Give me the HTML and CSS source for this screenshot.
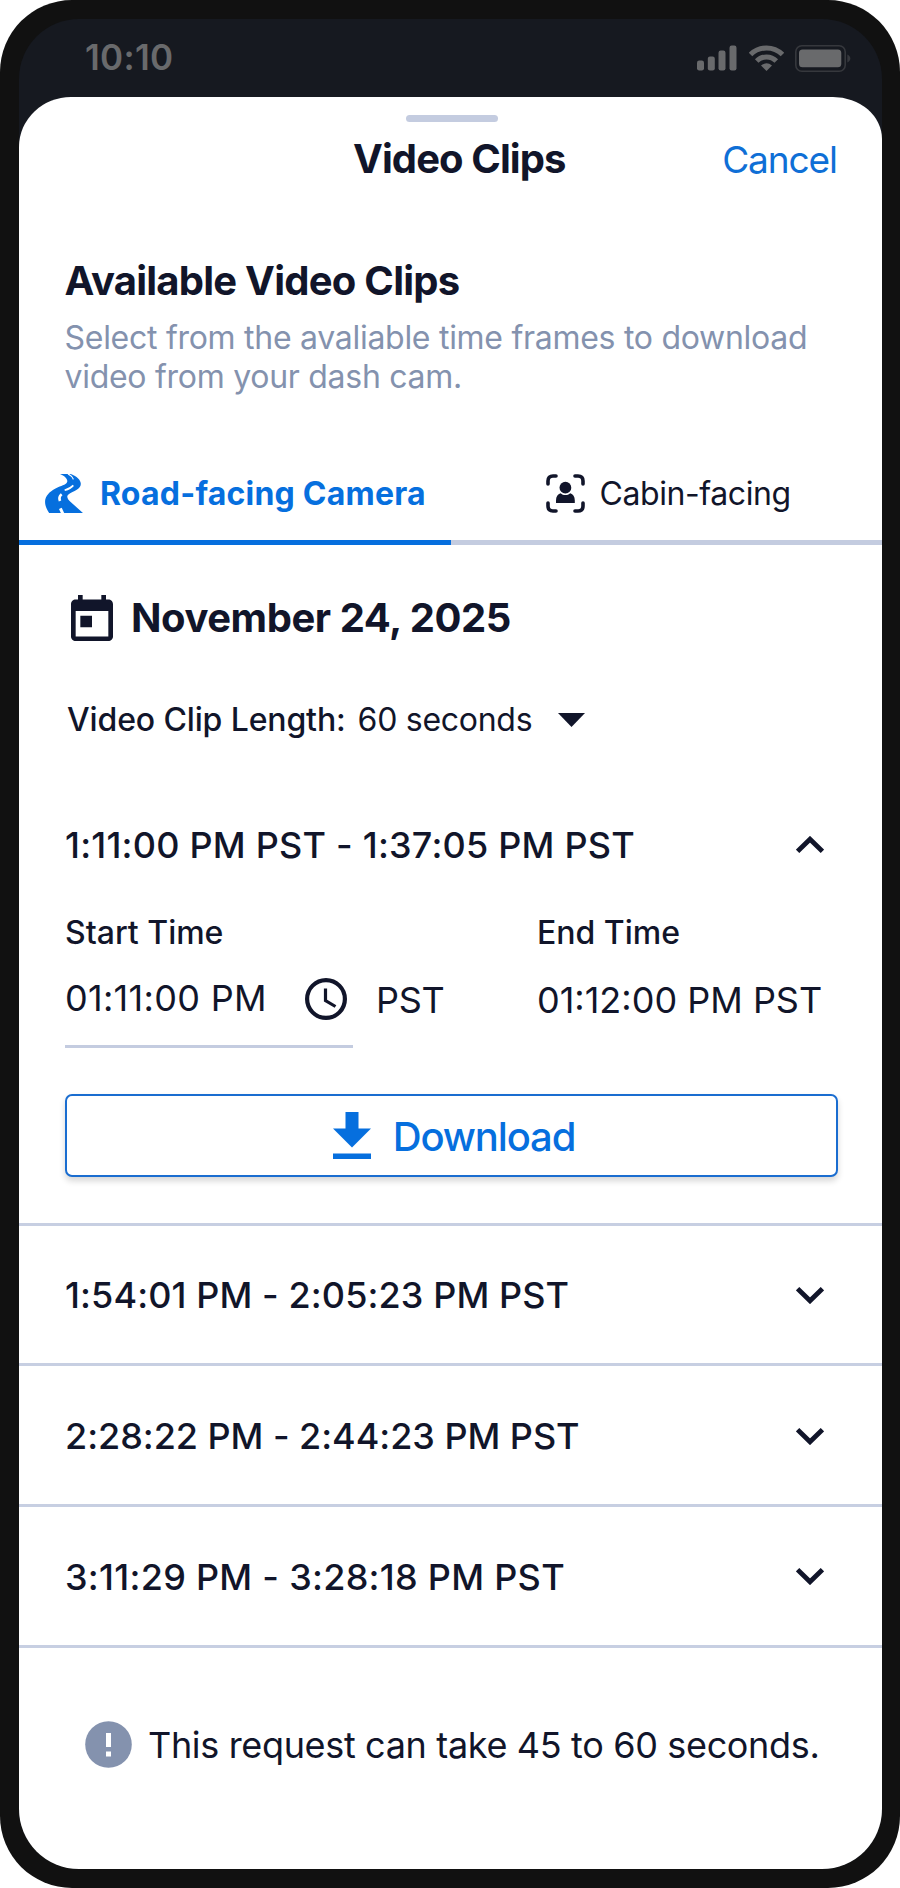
FILE: index.html
```
<!DOCTYPE html>
<html lang="en">
<head>
    <meta charset="UTF-8">
    <meta name="viewport" content="width=device-width, initial-scale=1.0">
    <title>Video Clips</title>
    <link rel="stylesheet" href="styles.css">
</head>
<body>

    <div class="phone">
        <div class="screen">

            <!-- Status bar -->
            <div class="status-bar">
                <span class="status-time">10:10</span>
                <div class="status-icons">
                    <svg width="40" height="26" viewBox="0 0 40 26" fill="#696a6c">
                        <rect x="0" y="15.5" width="7" height="10" rx="2.2"/>
                        <rect x="10.8" y="11.5" width="7" height="14" rx="2.2"/>
                        <rect x="21.5" y="5.5" width="7" height="20" rx="2.2"/>
                        <rect x="32.5" y="0.5" width="7" height="25" rx="2.2"/>
                    </svg>
                    <svg width="35" height="26" viewBox="0 0 35 26" fill="none" stroke="#696a6c" stroke-width="5">
                        <path d="M1.5 9.6a22.5 22.5 0 0 1 32 0"/>
                        <path d="M7.7 16a13.8 13.8 0 0 1 19.6 0"/>
                        <path d="M17.5 26l-5.5-5.5q5.5-4.6 11 0z" fill="#696a6c" stroke="none"/>
                    </svg>
                    <svg width="56" height="27" viewBox="0 0 56 27">
                        <rect x="0.8" y="0.8" width="49.4" height="25.4" rx="6" fill="none" stroke="#36383d" stroke-width="1.6"/>
                        <rect x="4" y="4.5" width="42.3" height="17.8" rx="3.5" fill="#696a6c"/>
                        <path d="M52.3 9.5c4 1.5 4 6.5 0 8z" fill="#36383d"/>
                    </svg>
                </div>
            </div>

            <div class="sheet">
                <div class="handle"></div>

                <header class="sheet-header">
                    <h1>Video Clips</h1>
                    <a class="cancel">Cancel</a>
                </header>

                <div class="intro">
                    <h2>Available Video Clips</h2>
                    <p>Select from the avaliable time frames to download video from your dash cam.</p>
                </div>

                <!-- Camera tabs -->
                <nav class="tabs">
                    <a class="tab tab-road active">
                        <svg width="38" height="39" viewBox="15 12 114 117">
                            <path fill="#066fde" d="M60 12h32c10 3 27 13 30 26 2 9-3 16-13 22-14 8-26 12-27 19-1 6 4 12 10 17l38 34H28C19 116 13 103 16 88c4-15 17-26 38-36 14-6 27-9 28-18 0-8-9-17-22-22z"/>
                            <g fill="none" stroke="#fff">
                                <path stroke-width="4" d="M84 12q14 7 16 16"/>
                                <path stroke-width="5" d="M100 46q-8 9-26 15"/>
                                <path stroke-width="8" d="M65 73q-10 8-5 20"/>
                                <path stroke-width="9" d="M61 115l8 17"/>
                            </g>
                        </svg>
                        <span>Road-facing Camera</span>
                    </a>
                    <a class="tab tab-cabin">
                        <svg width="39" height="39" viewBox="0 0 39 39" fill="#11152a">
                            <path d="M2 10V7q0-5 5-5h3M29 2h3q5 0 5 5v3M37 29v3q0 5-5 5h-3M10 37H7q-5 0-5-5v-3" fill="none" stroke="#11152a" stroke-width="3.6" stroke-linecap="round"/>
                            <circle cx="19.4" cy="13.7" r="5.9"/>
                            <path d="M10 29v-2.5c0-4 1.7-6.3 4.5-7.3 1.5 1.3 3 1.8 4.9 1.8s3.4-.5 4.9-1.8c2.8 1 4.5 3.3 4.5 7.3V29z"/>
                        </svg>
                        <span>Cabin-facing</span>
                    </a>
                </nav>

                <div class="date-row">
                    <svg width="42" height="46" viewBox="3 1 18 20" preserveAspectRatio="none" fill="#11152a">
                        <path d="M19 3h-1V1h-2v2H8V1H6v2H5c-1.11 0-1.99.9-1.99 2L3 19c0 1.1.89 2 2 2h14c1.1 0 2-.9 2-2V5c0-1.1-.9-2-2-2zm0 16H5V8h14v11zM7 10h5v5H7z"/>
                    </svg>
                    <span>November 24, 2025</span>
                </div>

                <div class="length-row">
                    <span class="length-label">Video Clip Length:</span>
                    <span class="length-value">60 seconds</span>
                    <svg width="27" height="14" viewBox="0 0 27 14" fill="#11152a"><path d="M0 0h27L13.5 14z"/></svg>
                </div>

                <!-- Open time frame -->
                <section class="clip-open">
                    <div class="clip-title">
                        <span class="range range-first">1:11:00 PM PST - 1:37:05 PM PST</span>
                        <svg class="chevron up" width="28" height="17" viewBox="0 0 28 17"><path d="M1.6 1.7L14 13.8 26.4 1.7"/></svg>
                    </div>

                    <div class="times">
                        <div class="time-start">
                            <div class="time-label">Start Time</div>
                            <div class="time-line">
                                <div class="time-field">
                                    <span>01:11:00 PM</span>
                                    <svg width="42" height="42" viewBox="0 0 42 42" fill="none" stroke="#11152a">
                                        <circle cx="21" cy="21" r="18.9" stroke-width="4.2"/>
                                        <path d="M20.5 10.5v12l10 6" stroke-width="3.2"/>
                                    </svg>
                                </div>
                                <span class="zone">PST</span>
                            </div>
                        </div>
                        <div class="time-end">
                            <div class="time-label">End Time</div>
                            <div class="time-line">01:12:00 PM PST</div>
                        </div>
                    </div>

                    <button class="download">
                        <svg width="38" height="47" viewBox="0 0 38 47" fill="#066fde"><path d="M12.5 0h13v16.5H38l-19 19-19-19h12.5zM0 41.5h38V47H0z"/></svg>
                        <span>Download</span>
                    </button>
                </section>

                <!-- Closed time frames -->
                <ul class="clip-list">
                    <li>
                        <span class="range">1:54:01 PM - 2:05:23 PM PST</span>
                        <svg class="chevron" width="28" height="17" viewBox="0 0 28 17"><path d="M1.6 1.7L14 13.8 26.4 1.7"/></svg>
                    </li>
                    <li>
                        <span class="range range-tight">2:28:22 PM - 2:44:23 PM PST</span>
                        <svg class="chevron" width="28" height="17" viewBox="0 0 28 17"><path d="M1.6 1.7L14 13.8 26.4 1.7"/></svg>
                    </li>
                    <li>
                        <span class="range range-wide">3:11:29 PM - 3:28:18 PM PST</span>
                        <svg class="chevron" width="28" height="17" viewBox="0 0 28 17"><path d="M1.6 1.7L14 13.8 26.4 1.7"/></svg>
                    </li>
                </ul>

                <div class="note">
                    <svg width="47" height="47" viewBox="0 0 47 47">
                        <circle cx="23.5" cy="23.5" r="23.3" fill="#8492ae"/>
                        <path d="M21 12h5v14h-5zM21 30.5h5v5h-5z" fill="#fff"/>
                    </svg>
                    <span>This request can take 45 to 60 seconds.</span>
                </div>
            </div>

        </div>
    </div>

</body>
</html>
```
FILE: styles.css
```
* {
    box-sizing: border-box;
}

body {
    margin: 0;
    background-color: #fff;
    font-family: Inter, "Liberation Sans", sans-serif;
    color: #11152a;
}

svg {
    display: block;
    flex-shrink: 0;
}

.phone {
    width: 900px;
    height: 1888px;
    padding: 19px 18px 19px 19px;
    background-color: #111;
    border-radius: 72px;
}

.screen {
    display: flex;
    flex-direction: column;
    height: 100%;
    background-color: #161920;
    border-radius: 60px;
    overflow: hidden;
}

/* Status bar */
.status-bar {
    display: flex;
    justify-content: space-between;
    align-items: center;
    height: 78px;
    padding: 0 31px 0 66px;
    flex-shrink: 0;
}

.status-time {
    margin-bottom: 3px;
    font-size: 35px;
    font-weight: 600;
    letter-spacing: 0.3px;
    color: #696a6c;
}

.status-icons {
    display: flex;
    align-items: center;
    gap: 11.5px;
}

.sheet {
    flex: 1;
    background-color: #fff;
    border-radius: 52px 49px 0 0 / 50px 42px 0 0;
    overflow: hidden;
}

.handle {
    width: 92px;
    height: 7px;
    margin: 18px 0 0 387px;
    border-radius: 4px;
    background-color: #c4cce0;
}

.sheet-header {
    display: flex;
    align-items: center;
    justify-content: space-between;
    height: 74px;
    padding: 0 45px 0 334px;
}

h1 {
    margin: 0 0 2px;
    font-size: 40px;
    font-weight: 700;
    letter-spacing: -0.92px;
}

.cancel {
    font-size: 37px;
    letter-spacing: -1.08px;
    color: #0f6fd6;
}

.intro {
    padding: 61px 46px 0 45.5px;
}

h2 {
    margin: 0 0 13px;
    font-size: 40px;
    line-height: 48px;
    font-weight: 700;
    letter-spacing: -0.76px;
}

.intro p {
    margin: 0;
    font-size: 32px;
    line-height: 39.3px;
    letter-spacing: -0.28px;
    color: #8492ae;
}

/* Tabs */
.tabs {
    display: grid;
    grid-template-columns: 1fr 1fr;
    margin-top: 50px;
}

.tab {
    display: flex;
    align-items: center;
    height: 98px;
    border-bottom: 5px solid #c4cce0;
    font-size: 32px;
}

.tab-road {
    gap: 17px;
    padding-left: 26px;
}

.tab-cabin {
    gap: 15px;
    padding-left: 95px;
    letter-spacing: -0.42px;
}

.tab.active {
    border-color: #066fde;
    color: #066fde;
    font-weight: 700;
    letter-spacing: 0.22px;
}

.date-row {
    display: flex;
    align-items: center;
    gap: 18px;
    height: 60px;
    margin-top: 43px;
    padding-left: 52px;
    font-size: 40px;
    font-weight: 700;
    letter-spacing: -0.45px;
}

.length-row {
    display: flex;
    align-items: center;
    height: 40px;
    margin-top: 52px;
    padding-left: 48px;
    font-size: 32px;
}

.length-label {
    margin-right: 12px;
    font-weight: 500;
    letter-spacing: -0.13px;
}

.length-value {
    margin-right: 26px;
    letter-spacing: -0.28px;
}

/* Time frames */
.range {
    font-size: 36px;
    font-weight: 500;
    letter-spacing: 0.1px;
}

.range-first {
    letter-spacing: 0.22px;
}

.range-wide {
    letter-spacing: 0.28px;
}

.range-tight {
    letter-spacing: -0.04px;
}

.chevron {
    fill: none;
    stroke: #11152a;
    stroke-width: 4.8px;
}

.chevron.up {
    transform: rotate(180deg);
}

.clip-open {
    margin-top: 80px;
    padding: 0 44px 46px 46px;
}

.clip-title {
    display: flex;
    justify-content: space-between;
    align-items: center;
    height: 50px;
    padding-right: 14px;
}

.times {
    display: flex;
    justify-content: space-between;
    margin-top: 43px;
}

.time-label {
    font-size: 32px;
    line-height: 40px;
    font-weight: 500;
}

.time-line {
    display: flex;
    align-items: center;
    height: 95px;
    font-size: 36px;
}

.time-field {
    display: flex;
    justify-content: space-between;
    align-items: center;
    width: 288px;
    height: 95px;
    padding-right: 6px;
    border-bottom: 3px solid #c4cce0;
    letter-spacing: 0.3px;
}

.time-field span {
    padding-bottom: 2px;
}

.zone {
    margin-left: 23px;
    letter-spacing: -0.3px;
}

.time-end {
    width: 301px;
}

.download {
    display: flex;
    justify-content: center;
    align-items: center;
    gap: 22px;
    width: 100%;
    height: 83px;
    margin-top: 46px;
    padding: 0 0 0 5px;
    border: 2px solid #1a6dd0;
    border-radius: 7px;
    background-color: #fff;
    box-shadow: 0 4px 6px rgba(0, 0, 0, 0.16);
    font-family: inherit;
    font-size: 40px;
    font-weight: 500;
    letter-spacing: -1.15px;
    color: #066fde;
}

.download span {
    padding-top: 2px;
}

.clip-list {
    margin: 0;
    padding: 0;
    list-style: none;
    border-bottom: 3px solid #c7cfe2;
}

.clip-list li {
    display: flex;
    justify-content: space-between;
    align-items: center;
    height: 140.67px;
    padding: 2px 58px 0 46px;
    border-top: 3px solid #c7cfe2;
}

.note {
    display: flex;
    align-items: center;
    gap: 16px;
    height: 60px;
    margin-top: 67px;
    padding-left: 66px;
    font-size: 36px;
    letter-spacing: -0.34px;
}
```
